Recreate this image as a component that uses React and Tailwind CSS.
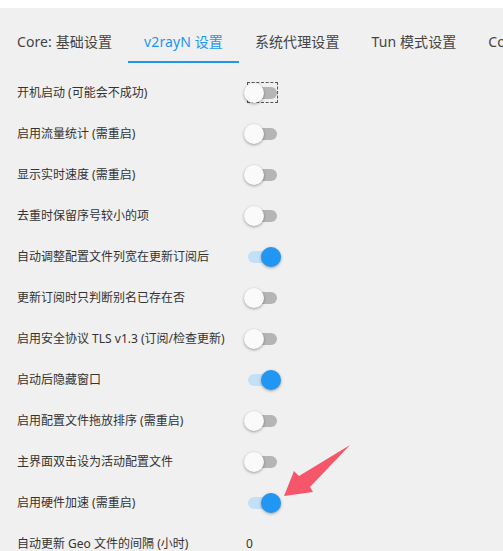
import React from "react";

const font = { fontFamily: '"Noto Sans", "Noto Sans CJK SC", sans-serif' };

const rows = [
  ["开机启动 (可能会不成功)", false, true],
  ["启用流量统计 (需重启)", false],
  ["显示实时速度 (需重启)", false],
  ["去重时保留序号较小的项", false],
  ["自动调整配置文件列宽在更新订阅后", true],
  ["更新订阅时只判断别名已存在否", false],
  ["启用安全协议 TLS v1.3 (订阅/检查更新)", false],
  ["启动后隐藏窗口", true],
  ["启用配置文件拖放排序 (需重启)", false],
  ["主界面双击设为活动配置文件", false],
  ["启用硬件加速 (需重启)", true],
];

const tabs = ["Core: 基础设置", "v2rayN 设置", "系统代理设置", "Tun 模式设置", "Core: 路由设置"];

function Toggle({ on, focus }) {
  return (
    <div className="relative w-[38px] h-[20px]">
      {focus && (
        <div className="absolute left-[3px] top-[-1px] w-[31px] h-[21px] border border-dashed border-[#555]" />
      )}
      <div
        className={
          "absolute left-[4px] top-[4px] w-[29px] h-[12px] rounded-full " +
          (on ? "bg-[#c4e0f7]" : "bg-[#b5b5b5]")
        }
      />
      <div
        className={
          "absolute top-0 w-[20px] h-[20px] rounded-full shadow-[0_1px_3px_rgba(0,0,0,0.35)] " +
          (on ? "left-[17px] bg-[#2196f3]" : "left-0 bg-[#fafafa]")
        }
      />
    </div>
  );
}

export default function App() {
  return (
    <div className="relative w-[503px] h-[551px] overflow-hidden bg-[#f0f0f0]" style={font}>
      <div className="h-2 bg-white" />
      <div className="flex pl-px pt-[11px] whitespace-nowrap overflow-hidden">
        {tabs.map((t, i) => (
          <div
            key={t}
            className={
              "relative shrink-0 h-[44px] px-4 flex items-center text-[14px] tracking-[0.1px] leading-none " +
              (i === 1 ? "text-[#2196f3]" : "text-[#444]")
            }
          >
            <span className="pt-[2px]">{t}</span>
            {i === 1 && <div className="absolute left-0 right-0 bottom-0 h-[2px] bg-[#2196f3]" />}
          </div>
        ))}
      </div>
      <div className="flex flex-col pt-[9px]">
        {rows.map(([label, on, focus]) => (
          <div key={label} className="h-[41px] flex items-center pl-[17px]">
            <div className="w-[227px] text-[12px] leading-none text-[#333] whitespace-nowrap">{label}</div>
            <Toggle on={on} focus={focus} />
          </div>
        ))}
        <div className="h-[41px] flex items-center pl-[17px]">
          <div className="w-[229px] text-[12px] leading-none text-[#333] whitespace-nowrap">自动更新 Geo 文件的间隔 (小时)</div>
          <div className="text-[12px] leading-none text-[#333]">0</div>
        </div>
      </div>
      <svg className="absolute left-0 top-0 pointer-events-none" width="503" height="551">
        <polygon
          points="284,496 294,471 299,476 350,445 310,487 313,492"
          fill="#f5566a"
        />
      </svg>
    </div>
  );
}
